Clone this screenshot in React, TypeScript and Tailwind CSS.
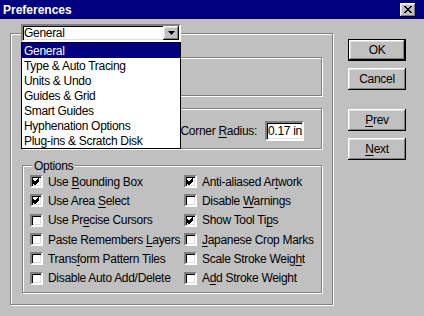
import React from "react";

const raised =
  "shadow-[inset_-1px_-1px_0_#000,inset_1px_1px_0_#fff,inset_-2px_-2px_0_#808080,inset_2px_2px_0_#dfdfdf]";
const sunken =
  "border-2 border-t-[#808080] border-l-[#808080] border-b-white border-r-white shadow-[inset_1px_1px_0_#000,inset_-1px_-1px_0_#dfdfdf]";
const groove =
  "border border-[#808080] shadow-[inset_1px_1px_0_#fff,1px_1px_0_#fff]";

function Label({ text, u }: { text: string; u?: number }) {
  if (u === undefined) return <span className="whitespace-nowrap">{text}</span>;
  return (
    <span className="whitespace-nowrap">
      {text.slice(0, u)}
      <span className="underline underline-offset-[2px]">{text[u]}</span>
      {text.slice(u + 1)}
    </span>
  );
}

function Check({ checked, text, u }: { checked: boolean; text: string; u?: number }) {
  return (
    <div className="flex h-[19.33px] items-center gap-[5px] whitespace-nowrap">
      <div className={`box-border h-[13px] w-[13px] shrink-0 bg-white ${sunken}`}>
        {checked && (
          <svg width="9" height="9" viewBox="0 0 9 9" className="block">
            <path d="M1 3.5 L3 5.5 L7 1.5 M1 4.5 L3 6.5 L7 2.5 M1 5.5 L3 7.5 L7 3.5" stroke="#000" strokeWidth="1" fill="none" shapeRendering="crispEdges" />
          </svg>
        )}
      </div>
      <Label text={text} u={u} />
    </div>
  );
}

function Btn({ children, def }: { children: React.ReactNode; def?: boolean }) {
  return (
    <div
      className={`box-border flex h-[22px] w-[58px] items-center justify-center bg-[#c0c0c0] text-black ${
        def ? "border border-black" : ""
      } ${raised}`}
    >
      {children}
    </div>
  );
}

export default function App() {
  const items = [
    "General",
    "Type & Auto Tracing",
    "Units & Undo",
    "Guides & Grid",
    "Smart Guides",
    "Hyphenation Options",
    "Plug-ins & Scratch Disk",
  ];
  const left: [boolean, string, number | undefined][] = [
    [true, "Use Bounding Box", 4],
    [true, "Use Area Select", 9],
    [false, "Use Precise Cursors", 6],
    [false, "Paste Remembers Layers", 16],
    [false, "Transform Pattern Tiles", 5],
    [false, "Disable Auto Add/Delete", undefined],
  ];
  const right: [boolean, string, number | undefined][] = [
    [true, "Anti-aliased Artwork", 15],
    [false, "Disable Warnings", 8],
    [true, "Show Tool Tips", 12],
    [false, "Japanese Crop Marks", 0],
    [false, "Scale Stroke Weight", 17],
    [false, "Add Stroke Weight", 1],
  ];
  return (
    <div
      className="h-[316px] w-[424px] overflow-hidden bg-[#c0c0c0] text-[12px] leading-none tracking-[-0.3px] text-black"
      style={{ fontFamily: '"Liberation Sans", Arial, sans-serif' }}
    >
      <div className="flex h-[19px] items-center justify-between bg-[#000080] pl-[3px] pr-[8px]">
        <span className="text-[12px] font-bold tracking-normal text-white">Preferences</span>
        <div className={`box-border flex h-[14px] w-[16px] items-center justify-center bg-[#c0c0c0] ${raised}`}>
          <svg width="8" height="7" viewBox="0 0 8 7">
            <path d="M0 0 L7 7 M1 0 L8 7 M7 0 L0 7 M8 0 L1 7" stroke="#000" strokeWidth="1" />
          </svg>
        </div>
      </div>
      <div className="flex">
        <div className="pl-[10px] pt-[14px]">
          <div className={`relative box-border h-[272px] w-[323px] ${groove}`}>
            <div className={`ml-[10px] mt-[-10px] box-border flex h-[18px] w-[160px] items-center bg-white pl-[1px] ${sunken}`}>
              <span className="flex-1">General</span>
              <div className={`box-border flex h-[14px] w-[16px] items-center justify-center bg-[#c0c0c0] ${raised}`}>
                <svg width="7" height="4" viewBox="0 0 7 4">
                  <path d="M0 0 H7 L3.5 4 Z" fill="#000" />
                </svg>
              </div>
            </div>
            <div className={`ml-[11px] mt-[15px] box-border h-[39px] w-[300px] ${groove}`} />
            <div className={`ml-[11px] mt-[12px] box-border flex h-[41px] w-[300px] items-start justify-end gap-[8px] pr-[17px] pt-[12px] ${groove}`}>
              <span className="leading-[20px]">
                <Label text="Corner Radius:" u={7} />
              </span>
              <div className={`box-border flex h-[20px] w-[39px] items-center overflow-hidden whitespace-nowrap bg-white pl-[1px] ${sunken}`}>0.17 in</div>
            </div>
            <div className={`relative ml-[11px] mt-[16px] box-border h-[128px] w-[300px] pl-[7px] pt-[6px] ${groove}`}>
              <span className="absolute left-[9px] top-[-7px] bg-[#c0c0c0] px-[2px] leading-[14px]">Options</span>
              <div className="grid grid-cols-[154px_1fr]">
                <div className="flex flex-col">
                  {left.map(([c, t, u]) => (
                    <Check key={t} checked={c} text={t} u={u} />
                  ))}
                </div>
                <div className="flex flex-col">
                  {right.map(([c, t, u]) => (
                    <Check key={t} checked={c} text={t} u={u} />
                  ))}
                </div>
              </div>
            </div>
            <div className="absolute left-[10px] top-[8px] box-border w-[160px] border border-black bg-white">
              {items.map((it, i) => (
                <div
                  key={it}
                  className={`flex h-[15px] items-center whitespace-nowrap pl-[2px] ${i === 0 ? "bg-[#000080] text-white" : ""}`}
                >
                  {it}
                </div>
              ))}
            </div>
          </div>
        </div>
        <div className="ml-[15px] flex flex-col pt-[20px]">
          <Btn def>OK</Btn>
          <div className="mt-[7px]">
            <Btn>Cancel</Btn>
          </div>
          <div className="mt-[19px]">
            <Btn>
              <Label text="Prev" u={0} />
            </Btn>
          </div>
          <div className="mt-[7px]">
            <Btn>
              <Label text="Next" u={0} />
            </Btn>
          </div>
        </div>
      </div>
    </div>
  );
}
